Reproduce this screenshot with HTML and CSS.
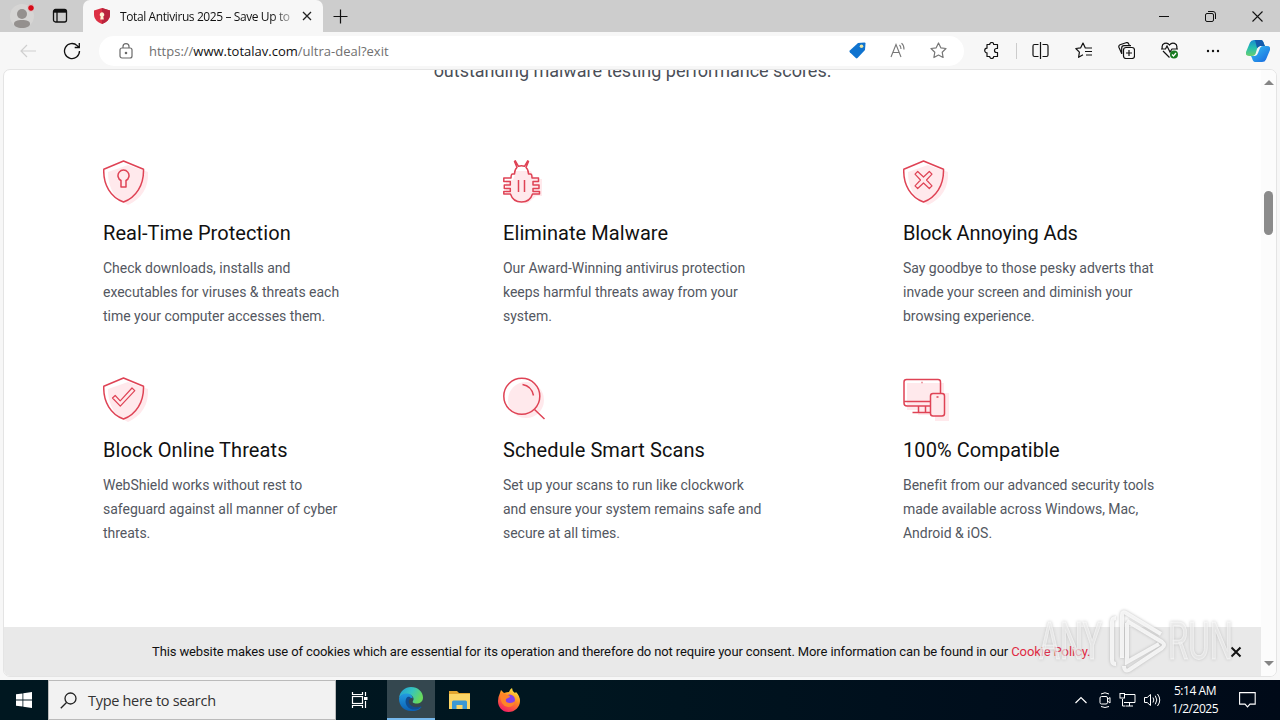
FILE: index.html
```html
<!DOCTYPE html>
<html lang="en">
  <head>
    <meta charset="utf-8" />
    <title>Total Antivirus 2025 – Save Up to</title>
    <link rel="stylesheet" href="styles.css">
  </head>
  <body>
    <div class="desktop">
      <div class="tabbar">
        <svg class="profile" width="24" height="26" viewBox="0 0 24 26">
          <circle cx="12" cy="13" r="12" fill="#d6d5d4"/>
          <circle cx="12" cy="11" r="5" fill="#94908e"/>
          <path d="M4 21c0-3 3-4 8-4s8 1 8 4c0 2-3 4-8 4s-8-2-8-4z" fill="#94908e"/>
          <circle cx="21" cy="5" r="3.4" fill="#d60b18" stroke="#ddd"/>
        </svg>
        <svg class="tab-actions" width="16" height="16" viewBox="0 0 16 16" fill="none" stroke="#111" stroke-width="1.3">
          <rect x="1.5" y="1.5" width="13" height="12.5" rx="2"/>
          <path d="M2 3.2h12" stroke-width="3"/>
          <path d="M5 4v10"/>
        </svg>
        <div class="tab">
          <svg width="16" height="16" viewBox="0 0 16 16">
            <path d="M8 0l8 2.5v4C16 11 12.500 14.500 8 16 3.500 14.500 0 11 0 6.500v-4z" fill="#dc3044"/>
            <path d="M8 0l8 2.500v4C16 11 12.500 14.500 8 16z" fill="#b9243c"/>
            <path d="M8 4.300a2.300 2.300 0 0 1 1.300 4.200l.5 3H6.200l.5-3A2.300 2.300 0 0 1 8 4.300z" fill="#fff3d5"/>
          </svg>
          <span class="tab-title">Total Antivirus 2025 – Save Up to</span>
          <svg class="tab-close" width="10" height="10" viewBox="0 0 10 10" stroke="#222" stroke-width="1.3"><path d="M1 1l8 8M9 1l-8 8"/></svg>
        </div>
        <svg class="new-tab" width="15" height="15" viewBox="0 0 15 15" stroke="#111" stroke-width="1.200"><path d="M.5 7.500h14M7.500.5v14"/></svg>
        <div class="window-buttons">
          <svg width="10" height="11" viewBox="0 0 10 11" stroke="#111"><path d="M0 5.500h10"/></svg>
          <svg width="11" height="11" viewBox="0 0 11 11" fill="none" stroke="#111"><rect x=".5" y="2.500" width="8" height="8" rx="1.500"/><path d="M3 .5h5a2.500 2.500 0 0 1 2.500 2.500v5"/></svg>
          <svg width="11" height="11" viewBox="0 0 11 11" stroke="#111" stroke-width="1.100"><path d="M.5.5l10 10M10.500.5l-10 10"/></svg>
        </div>
      </div>

      <div class="toolbar">
        <svg class="back" width="16" height="14" viewBox="0 0 16 14" fill="none" stroke="#cfcfcf" stroke-width="1.200"><path d="M16 7H1M7 1L1 7l6 6"/></svg>
        <svg class="reload" width="18" height="18" viewBox="0 0 18 18" fill="none" stroke="#111" stroke-width="1.300"><path d="M16.500 9a7.500 7.500 0 1 1-2.300-5.400L16 5.300M16.300 1v4.500h-4.600"/></svg>
        <div class="address">
          <svg width="14" height="16" viewBox="0 0 14 16" fill="none" stroke="#6a6a6a" stroke-width="1.200"><rect x="1" y="5" width="12" height="10" rx="2"/><path d="M4 5V3.600a3 3 0 0 1 6 0V5"/><circle cx="7" cy="10" r=".7" fill="#666"/></svg>
          <span class="url">https://<b>www.totalav.com</b>/ultra-deal?exit</span>
          <div class="address-icons">
            <svg width="17" height="17" viewBox="0 0 17 17"><path d="M9 1l6.500-.5q1 0 1 1L16 8l-7.500 8q-.8.8-1.700 0L.8 10.300q-.8-.8 0-1.700z" fill="#0f73cf"/><circle cx="12.500" cy="4.300" r="1.800" fill="#e9e6a5"/></svg>
            <svg width="16" height="16" viewBox="0 0 16 16" fill="none" stroke="#777" stroke-width="1.100"><path d="M1 15L6 2.500 11 15M2.800 10.500h6.400M9.500 3q1.500 1.500 1.500 4M11.500 1.200q2.700 2.300 2.500 6.300"/></svg>
            <svg width="17" height="17" viewBox="0 0 17 17" fill="none" stroke="#777" stroke-width="1.200" stroke-linejoin="round"><path d="M8.500 1l2.300 4.800 5.200.7-3.800 3.700.9 5.300-4.600-2.500-4.600 2.500.9-5.300L1 6.500l5.200-.7z"/></svg>
          </div>
        </div>
        <div class="tools">
          <svg width="17" height="17" viewBox="0 0 17 17" fill="none" stroke="#111" stroke-width="1.200" stroke-linejoin="round"><path d="M4 2.500h2.700a2 2 0 0 1 4 0H14.500V6.500h-1a2 2 0 0 0 0 4h1v4h-3.800a2 2 0 0 1-4 0H4v-3.700a2.300 2.300 0 1 1 0-4.600z"/></svg>
          <i class="divider"></i>
          <svg width="17" height="17" viewBox="0 0 17 17" fill="none" stroke="#111" stroke-width="1.200"><path d="M6.500 2.500h-4q-1.500 0-1.500 1.500v9q0 1.500 1.500 1.500h4M10.500 2.500h4q1.500 0 1.500 1.500v9q0 1.500-1.500 1.500h-4M8.500 0v17"/></svg>
          <svg width="17" height="17" viewBox="0 0 17 17" fill="none" stroke="#111" stroke-width="1.200" stroke-linejoin="round"><path d="M13 6h-2.700L8 1 5.700 5.800.8 6.500l3.600 3.600-.8 5.200L8 12.800M10.500 6H17M10 9.500h7M11 13h6"/></svg>
          <svg width="17" height="17" viewBox="0 0 17 17" fill="none" stroke="#111" stroke-width="1.200"><rect x="5.500" y="5.500" width="11" height="11" rx="2.500"/><path d="M11 8v6M8 11h6M3.700 11.500L1 5.500Q.3 3.500 2 2.700L8 .7q2-.6 2.700 1.200l.6 1.600M3.700 12V6q0-2.300 2.300-2.300h7"/></svg>
          <svg width="18" height="17" viewBox="0 0 18 17" fill="none" stroke="#111" stroke-width="1.200"><path d="M1.300 6.500C0 1 6-.5 8.500 3 11-.5 17 1 15.700 6.500M2 9l6.500 6.500M0 7h4.500L6 4l3 6 2-3h6"/><circle cx="13" cy="12.500" r="4" fill="#187b20" stroke="none"/><path d="M11 12.500l1.500 1.500 2.500-3" stroke="#fff"/></svg>
          <svg width="14" height="4" viewBox="0 0 14 4" fill="#111"><circle cx="2" cy="2" r="1.200"/><circle cx="7" cy="2" r="1.200"/><circle cx="12" cy="2" r="1.200"/></svg>
          <svg width="24" height="24" viewBox="0 0 24 24">
            <defs>
              <linearGradient id="cop1" x2="0" y2="1"><stop stop-color="#168bd0"/><stop offset=".5" stop-color="#26bfae"/><stop offset="1" stop-color="#68cf70"/></linearGradient>
              <linearGradient id="cop2" x2="1" y2="1"><stop stop-color="#35c5f2"/><stop offset="1" stop-color="#1763df"/></linearGradient>
            </defs>
            <path d="M4 3.500Q5 1 8 1h7q2 0 3 4l1 2h-5q-2 0-3 3l-1.500 5Q8.500 17 6 17H3q-4 0-3-4z" fill="url(#cop1)"/>
            <path d="M9 1h6q2 0 3 4l1 2h-5l-3 2z" fill="#135bac"/>
            <path d="M20 20.500q-1 2.500-4 2.500H9q-2 0-3-4l-1-2h4q2 0 3-3l2-5q1-2 3-2h4q4 0 3 4z" fill="url(#cop2)"/>
          </svg>
        </div>
      </div>

      <div class="viewport">
        <div class="page">
          <p class="intro">outstanding malware testing performance scores.</p>
          <div class="features">
            <div class="feature">
              <svg class="icon" viewBox="0 0 46 46">
                <path class="shade" d="M25 5l20 7c1 16-7 27-20 33C12 39 5 29 5 12z"/>
                <path class="line" d="M20.500 1l20 8.200C41 25 33 37.500 20.500 42 8 37.500 0 25 .8 9.200zM18 27v-6.500a5.500 5.500 0 1 1 5 0V27z"/>
              </svg>
              <h3>Real-Time Protection</h3>
              <p>Check downloads, installs and<br>executables for viruses &amp; threats each<br>time your computer accesses them.</p>
            </div>
            <div class="feature">
              <svg class="icon" viewBox="0 0 46 46">
                <path class="shade" d="M13 11h15l4 8h7v17h-6L24 44 12 40 8 33H3V20h7z"/>
                <path class="line" d="M11.500 1.500l.8-.7 3.200 5.500Q18.500 5 21.500 6.300L24.700.8l.8.7L23 7.500q2.500 2 2.500 6.500h2q1.500 0 1.500 4h6.500v3.500H30V25h6v3.500h-6v3h6.500V34H29.500q-2.500 8-11 8t-11-8H.8v-2.500h6.500v-3h-6V25h6v-3.500H.8V18H8q0-4 1.500-4h2q0-4.500 2.500-6.500zM15.500 20v12M21.500 20v12"/>
              </svg>
              <h3>Eliminate Malware</h3>
              <p>Our Award-Winning antivirus protection<br>keeps harmful threats away from your<br>system.</p>
            </div>
            <div class="feature">
              <svg class="icon" viewBox="0 0 46 46">
                <path class="shade" d="M25 5l20 7c1 16-7 27-20 33C12 39 5 29 5 12z"/>
                <path class="line" d="M20.500 1l20 8.200C41 25 33 37.500 20.500 42 8 37.500 0 25 .8 9.200z"/>
                <path class="line thin" d="M14.700 11.500l5.800 5.500 5.800-5.500 2.700 2.700-5.500 5.800 5.500 5.800-2.700 2.700-5.800-5.500-5.800 5.500-2.700-2.700 5.500-5.800-5.500-5.800z"/>
              </svg>
              <h3 class="tight">Block Annoying Ads</h3>
              <p>Say goodbye to those pesky adverts that<br>invade your screen and diminish your<br>browsing experience.</p>
            </div>
            <div class="feature">
              <svg class="icon" viewBox="0 0 46 46">
                <path class="shade" d="M25 5l20 7c1 16-7 27-20 33C12 39 5 29 5 12z"/>
                <path class="line" d="M20.500 1l20 8.200C41 25 33 37.500 20.500 42 8 37.500 0 25 .8 9.200z"/>
                <path class="line thin" d="M9.500 21l2.700-2.500 5 5.300L29 11l2.800 2.600-14.500 15.600z"/>
              </svg>
              <h3>Block Online Threats</h3>
              <p>WebShield works without rest to<br>safeguard against all manner of cyber<br>threats.</p>
            </div>
            <div class="feature">
              <svg class="icon" viewBox="0 0 46 46">
                <circle class="shade" cx="23" cy="23" r="18"/>
                <circle class="line" cx="18.800" cy="19.300" r="18"/>
                <path class="line" d="M31.500 32.500L41.500 42M19.500 7.500q9 1.500 11 11"/>
              </svg>
              <h3>Schedule Smart Scans</h3>
              <p>Set up your scans to run like clockwork<br>and ensure your system remains safe and<br>secure at all times.</p>
            </div>
            <div class="feature">
              <svg class="icon" viewBox="0 0 46 46">
                <path class="shade" d="M4 6h37v10h5v28H32v-6H15v-5H4z"/>
                <path class="line" d="M37.500 16V5q0-2.500-2.500-2.500H3.500Q1 2.500 1 5v21q0 3 3 3h23M1 24.500h26M15.500 29v6.500M22.500 29v6.500M9.500 35.500h17.500M18.500 5.500h1"/>
                <rect class="line" x="27.500" y="16.500" width="14" height="22.500" rx="2.500"/>
                <path class="line" d="M33.500 20h2"/>
              </svg>
              <h3>100% Compatible</h3>
              <p>Benefit from our advanced security tools<br>made available across Windows, Mac,<br>Android &amp; iOS.</p>
            </div>
          </div>
          <div class="cookies">
            <p>This website makes use of cookies which are essential for its operation and therefore do not require your consent. More information can be found in our <a>Cookie Policy.</a></p>
            <svg width="12" height="12" viewBox="0 0 12 12" stroke="#111" stroke-width="2"><path d="M1.500 1.500l9 9M10.500 1.500l-9 9"/></svg>
          </div>
        </div>
        <div class="scrollbar">
          <i class="arrow up"></i>
          <i class="thumb"></i>
          <i class="arrow down"></i>
        </div>
      </div>

      <div class="taskbar">
        <div class="start">
          <svg width="16" height="16" viewBox="0 0 16 16" fill="#fff"><path d="M0 2.300L6.500 1.400v6.200H0zM7.300 1.200L16 0v7.600H7.300zM0 8.400h6.500v6.200L0 13.700zM7.300 8.400H16V16l-8.700-1.200z"/></svg>
        </div>
        <div class="search">
          <svg width="17" height="17" viewBox="0 0 17 17" fill="none" stroke="#222" stroke-width="1.300"><circle cx="10.500" cy="6.500" r="5.500"/><path d="M6.500 10.500L.8 16.300"/></svg>
          <span>Type here to search</span>
        </div>
        <div class="task">
          <svg width="18" height="18" viewBox="0 0 18 18" fill="none" stroke="#fff" stroke-width="1.200"><path d="M1.500 1v2.500h10V1M1.500 17v-2.500h10V17M14.500 1v4M14.500 10v7"/><rect x="1.500" y="5.500" width="10" height="7"/><path d="M13 7.500h3.500" stroke-width="3"/></svg>
        </div>
        <div class="task active">
          <svg width="24" height="24" viewBox="0 0 24 24">
            <defs>
              <linearGradient id="edge1" y2=".4"><stop stop-color="#219bd7"/><stop offset=".55" stop-color="#35c4c0"/><stop offset="1" stop-color="#67d95d"/></linearGradient>
              <linearGradient id="edge2" x2="0" y2="1"><stop stop-color="#229be1"/><stop offset="1" stop-color="#0b60b4"/></linearGradient>
            </defs>
            <path d="M0 11C1 4 6 0 12 0c7 0 12 5 12 10.500 0 4-3 6-6.500 6-3 0-4.500-1-3.500-2.500 2-3-1-7-6-7-4 0-7 2-8 4z" fill="url(#edge1)"/>
            <path d="M0 11.500C1 8 4 6.500 7.500 6.500c4 0 6.500 2.500 6 5-2-1.500-5.500.5-5 4 .6 4 5 6 10 5.500 2-.2 3.500-1.500 4-1-2 3-6 4.500-10.500 4C5 24 0 19 0 11.500z" fill="url(#edge2)"/>
            <path d="M8.500 10C6 12 6 16 8 19c2 3 6 4 9 3.500 3-.6 5-2 5.500-3.500-5 2.500-11 1-12.500-3-.8-2 .1-4 2-5-1-1.200-2.500-1.700-3.500-1z" fill="#114d91"/>
          </svg>
        </div>
        <div class="task">
          <svg width="22" height="20" viewBox="0 0 22 20"><path d="M0 1h8l2 2h11v6H0z" fill="#e3a52f"/><path d="M0 4h21v15H0z" fill="#fcd566"/><path d="M3 19v-7q0-1.500 1.500-1.500h12q1.500 0 1.500 1.500v7h-4.500v-4h-6v4z" fill="#3d98d3"/></svg>
        </div>
        <div class="task">
          <svg width="24" height="24" viewBox="0 0 24 24">
            <defs>
              <linearGradient id="fox" x1=".8" x2=".3" y2="1"><stop stop-color="#fff044"/><stop offset=".45" stop-color="#ff8b21"/><stop offset="1" stop-color="#f41b65"/></linearGradient>
            </defs>
            <path d="M3 5l1-3 3 3q3-1 5-1 1-3 3-4 0 3 3 5l1-1q4 4 4 9c0 6-5 11-11.500 11S1 19 1 13q0-4 2-8z" fill="url(#fox)"/>
            <circle cx="12.500" cy="12" r="5.500" fill="#8540e8"/>
            <path d="M3 6q4-2 7 1 3 0 3 2l-4 2q-1 4 4 4 3 0 5-2-1 6-7 6-8-1-8-13z" fill="#ff8428"/>
          </svg>
        </div>
        <div class="tray">
          <svg width="12" height="8" viewBox="0 0 12 8" fill="none" stroke="#fff" stroke-width="1.200"><path d="M.5 7L6 1.500 11.500 7"/></svg>
          <svg width="12" height="16" viewBox="0 0 12 16" fill="none" stroke="#fff"><rect x="1" y="4.500" width="7.500" height="7.500" rx="1.500"/><path d="M8.500 7.500l2.500-2v5.500l-2.500-2M2 2q4-2.500 8 0M2 14.500q4 2 8 0"/></svg>
          <svg width="17" height="14" viewBox="0 0 17 14" fill="none" stroke="#fff"><path d="M5.500 1.500h10.500v8H5M10.500 9.500v3.500M7 13h7M3.500 6v7M3.500 13h3"/><rect x="1" y=".5" width="4.500" height="4.500"/></svg>
          <svg width="17" height="14" viewBox="0 0 17 14" fill="none" stroke="#fff"><path d="M.5 4.500h2.700L6.500 1.500v11L3.200 9.500H.5zM9 4.500q1.700 2.500 0 5M11.300 2.700q3 4.300 0 8.600M13.500 1q4.500 6 0 12"/></svg>
          <div class="clock">5:14 AM<br>1/2/2025</div>
          <svg width="17" height="16" viewBox="0 0 17 16" fill="none" stroke="#fff" stroke-width="1.100"><path d="M.6.6h15.600v11.500H11l-2.500 2.800L6 12.100H.6z"/></svg>
        </div>
      </div>

      <svg class="watermark" width="210" height="72" viewBox="0 0 210 72">
        <text x="5" y="53" textLength="63" lengthAdjust="spacingAndGlyphs">ANY</text>
        <path class="play" d="M82 12q-4 0-4 4v38q0 4 4 4M88 52V9q0-4 4-2l35 21M93 17v39l32-18M90 60q0 6 5 4l33-22q4-3 0-6L93 15"/>
        <text x="134" y="53" textLength="65" lengthAdjust="spacingAndGlyphs">RUN</text>
      </svg>
    </div>
  </body>
</html>
```
FILE: styles.css
```css
body {
  margin: 0;
  overflow: hidden;
  font-family: "Open Sans", "Noto Sans", sans-serif;
}
svg {
  display: block;
  flex: none;
}
h3,
p {
  margin: 0;
}
.desktop {
  position: relative;
  display: flex;
  flex-direction: column;
  width: 1280px;
  height: 720px;
  background: #f7f7f7;
}

/* browser */
.tabbar {
  display: flex;
  align-items: center;
  box-sizing: border-box;
  height: 32px;
  padding-left: 10px;
  background: #cdcdcd;
}
.tab-actions {
  margin: 0 15px 0 18px;
}
.tab {
  display: flex;
  align-items: center;
  box-sizing: border-box;
  width: 240px;
  height: 32px;
  padding: 0 11px;
  border-radius: 7px 7px 0 0;
  background: #f7f7f7;
}
.tab-title {
  width: 172px;
  margin-left: 10px;
  font-size: 12px;
  letter-spacing: -0.4px;
  white-space: nowrap;
  color: transparent;
  background: linear-gradient(90deg, #111 152px, #aaa 171px);
  background-clip: text;
  -webkit-background-clip: text;
}
.tab-close {
  margin-left: 11px;
}
.new-tab {
  margin-left: 10px;
}
.window-buttons {
  display: flex;
  gap: 36px;
  margin-left: auto;
  padding-right: 17px;
}
.toolbar {
  display: flex;
  align-items: center;
  height: 37px;
  padding-left: 20px;
}
.reload {
  margin: 0 18px 0 27px;
}
.address {
  display: flex;
  align-items: center;
  box-sizing: border-box;
  width: 865px;
  height: 30px;
  padding: 0 17px 0 20px;
  border-radius: 15px;
  background: #fff;
}
.url {
  margin-left: 16px;
  font-size: 13px;
  color: #707070;
}
.url b {
  font-weight: normal;
  color: #111;
}
.address-icons {
  display: flex;
  gap: 24px;
  margin-left: auto;
}
.tools {
  display: flex;
  align-items: center;
  justify-content: space-between;
  width: 287px;
  margin-left: 19px;
}
.divider {
  width: 1px;
  height: 16px;
  margin-right: -12px;
  margin-left: -10px;
  background: #ccc;
}
.viewport {
  display: flex;
  box-sizing: border-box;
  width: 1274px;
  height: 608px;
  margin-left: 3px;
  overflow: hidden;
  border: 1px solid #e4e4e4;
  border-radius: 7px;
  background: #fff;
}

/* web page */
.page {
  display: flex;
  flex-direction: column;
  width: 1257px;
  font-family: Roboto, sans-serif;
}
.intro {
  height: 22px;
  margin-top: -10px;
  font-size: 18px;
  line-height: 22px;
  letter-spacing: -0.02px;
  text-align: center;
  color: #4b4f58;
}
.features {
  display: grid;
  grid-template-columns: repeat(3, 400px);
  grid-auto-rows: 217px;
  margin: 78px 0 0 99px;
}
.icon {
  width: 46px;
  height: 46px;
}
.shade {
  fill: #ffe9ec;
}
.line {
  fill: none;
  stroke: #df4355;
  stroke-width: 1.5;
  stroke-linejoin: round;
}
.thin {
  stroke-width: 1.2;
}
.feature h3 {
  margin-top: 12px;
  font-size: 20px;
  font-weight: normal;
  line-height: 30px;
  letter-spacing: 0.08px;
  color: #111;
}
.feature .tight {
  letter-spacing: -0.12px;
}
.feature p {
  margin-top: 8px;
  font-size: 14px;
  line-height: 24px;
  letter-spacing: -0.02px;
  white-space: nowrap;
  color: #535761;
}
.cookies {
  display: flex;
  align-items: center;
  height: 49px;
  margin-top: auto;
  padding-left: 148px;
  background: #e9e9e9;
}
.cookies p {
  width: 1078px;
  font-size: 13px;
  letter-spacing: -0.12px;
  white-space: nowrap;
  color: #111;
}
.cookies a {
  color: #df2944;
}
.scrollbar {
  display: flex;
  flex-direction: column;
  align-items: center;
  width: 15px;
  background: #fcfcfc;
}
.arrow {
  border: 5px solid transparent;
}
.up {
  margin-top: 5px;
  border-bottom-color: #858585;
}
.down {
  margin: auto 0 5px;
  border-top-color: #858585;
}
.thumb {
  width: 9px;
  height: 44px;
  margin-top: 106px;
  border-radius: 5px;
  background: #8b8b8b;
}

/* taskbar */
.taskbar {
  display: flex;
  height: 40px;
  margin-top: auto;
  background: linear-gradient(90deg, #001720, #001620 45%, #000c1b 85%, #000a18);
}
.start,
.task {
  display: flex;
  align-items: center;
  justify-content: center;
  width: 48px;
}
.task {
  margin-right: 1px;
}
.search + .task {
  margin-right: 3px;
}
.active {
  box-sizing: border-box;
  border-bottom: 2px solid #76b9ed;
  background: #34474f;
}
.search {
  display: flex;
  align-items: center;
  box-sizing: border-box;
  width: 288px;
  padding-left: 11px;
  border: 1px solid #bbb;
  background: #f2f2f2;
}
.search span {
  margin-left: 11px;
  font-size: 14.5px;
  letter-spacing: -0.3px;
  color: #333;
}
.tray {
  display: flex;
  align-items: center;
  gap: 8px;
  margin-left: auto;
  padding-right: 24px;
}
.tray svg:first-child {
  margin-right: 4px;
}
.clock {
  width: 52px;
  font-size: 12px;
  line-height: 18px;
  letter-spacing: -0.45px;
  text-align: center;
  white-space: nowrap;
  color: #fff;
}
.clock + svg {
  margin-left: 10px;
}

/* ANY RUN mark over the page corner */
.watermark {
  position: absolute;
  top: 606px;
  left: 1034px;
  fill: rgba(255, 255, 255, 0.5);
  stroke: rgba(255, 255, 255, 0.5);
  filter: drop-shadow(0 0 1.5px #aaa);
  font-family: Roboto, sans-serif;
  font-size: 51px;
}
.play {
  fill: none;
  stroke: rgba(255, 255, 255, 0.8);
  stroke-width: 4;
}
```
